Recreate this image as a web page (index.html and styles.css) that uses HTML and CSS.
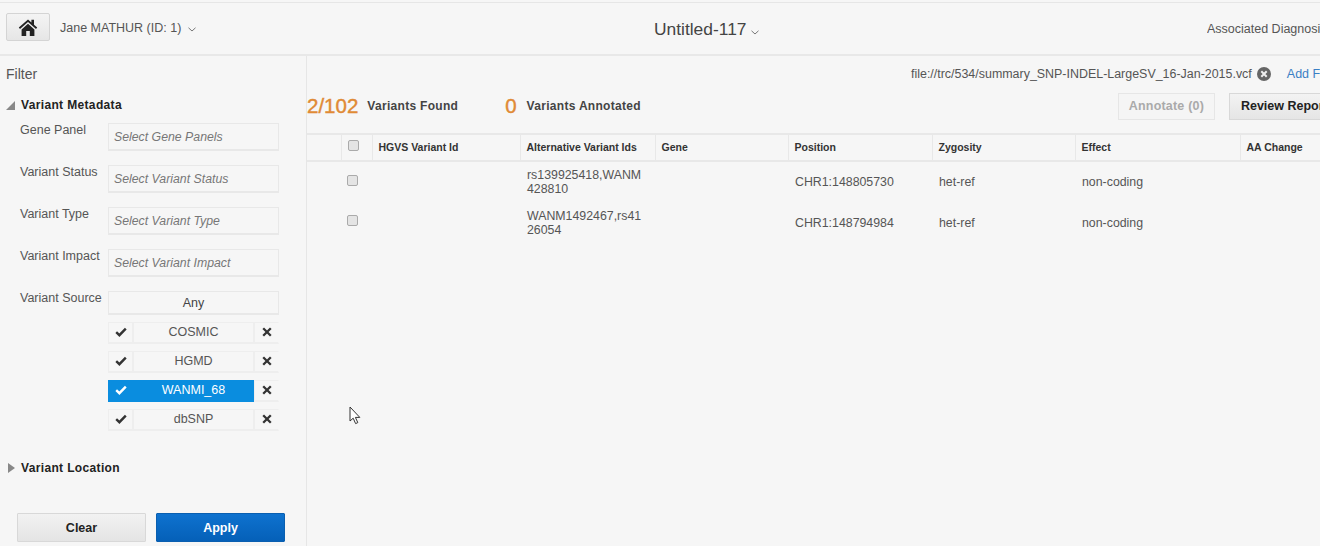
FILE: index.html
```html
<!DOCTYPE html>
<html lang="en">
<head>
<meta charset="utf-8">
<title>Variants</title>
<link rel="stylesheet" href="styles.css">
</head>
<body>
<div class="app">
  <header class="topbar">
    <div class="patient">
      <button class="home" aria-label="Home">
        <svg width="20" height="19" viewBox="0 0 20 19"><path d="M10 1.5 L0.8 9.6 L2 11 L10 4 L18 11 L19.2 9.6 L16 6.8 V1.8 H13.4 V4.5 Z" fill="#222"/><path d="M3.6 11.4 L10 5.8 L16.4 11.4 V18 H11.8 V13 H8.2 V18 H3.6 Z" fill="#222"/></svg>
      </button>
      <span class="patient-name">Jane MATHUR (ID: 1)</span>
      <svg class="chev" width="8" height="5" viewBox="0 0 8 5"><path d="M0.5 0.8 L4 4 L7.5 0.8" fill="none" stroke="#777" stroke-width="1"/></svg>
    </div>
    <div class="title">Untitled-117<svg class="chev" width="8" height="5" viewBox="0 0 8 5"><path d="M0.5 0.8 L4 4 L7.5 0.8" fill="none" stroke="#777" stroke-width="1"/></svg></div>
    <div class="assoc">Associated Diagnosis</div>
  </header>
  <div class="content">
    <aside class="sidebar">
      <h2 class="filter-title">Filter</h2>
      <div class="section-head open"><span class="tri-open"></span>Variant Metadata</div>
      <div class="fields">
        <label class="lbl">Gene Panel</label><div class="sel">Select Gene Panels</div>
        <label class="lbl">Variant Status</label><div class="sel">Select Variant Status</div>
        <label class="lbl">Variant Type</label><div class="sel">Select Variant Type</div>
        <label class="lbl">Variant Impact</label><div class="sel">Select Variant Impact</div>
        <label class="lbl">Variant Source</label>
        <div class="source">
          <div class="any">Any</div>
          <div class="src-row">
            <span class="ck"><svg width="12" height="10" viewBox="0 0 12 10"><path d="M1.2 5.2 L4.4 8.2 L10.8 1.6" fill="none" stroke="#333" stroke-width="2.4"/></svg></span>
            <span class="nm">COSMIC</span>
            <span class="x"><svg width="10" height="10" viewBox="0 0 10 10"><path d="M1.2 1.2 L8.8 8.8 M8.8 1.2 L1.2 8.8" fill="none" stroke="#333" stroke-width="2.3"/></svg></span>
          </div>
          <div class="src-row">
            <span class="ck"><svg width="12" height="10" viewBox="0 0 12 10"><path d="M1.2 5.2 L4.4 8.2 L10.8 1.6" fill="none" stroke="#333" stroke-width="2.4"/></svg></span>
            <span class="nm">HGMD</span>
            <span class="x"><svg width="10" height="10" viewBox="0 0 10 10"><path d="M1.2 1.2 L8.8 8.8 M8.8 1.2 L1.2 8.8" fill="none" stroke="#333" stroke-width="2.3"/></svg></span>
          </div>
          <div class="src-row active">
            <span class="ck"><svg width="12" height="10" viewBox="0 0 12 10"><path d="M1.2 5.2 L4.4 8.2 L10.8 1.6" fill="none" stroke="#fff" stroke-width="2.4"/></svg></span>
            <span class="nm">WANMI_68</span>
            <span class="x"><svg width="10" height="10" viewBox="0 0 10 10"><path d="M1.2 1.2 L8.8 8.8 M8.8 1.2 L1.2 8.8" fill="none" stroke="#333" stroke-width="2.3"/></svg></span>
          </div>
          <div class="src-row">
            <span class="ck"><svg width="12" height="10" viewBox="0 0 12 10"><path d="M1.2 5.2 L4.4 8.2 L10.8 1.6" fill="none" stroke="#333" stroke-width="2.4"/></svg></span>
            <span class="nm">dbSNP</span>
            <span class="x"><svg width="10" height="10" viewBox="0 0 10 10"><path d="M1.2 1.2 L8.8 8.8 M8.8 1.2 L1.2 8.8" fill="none" stroke="#333" stroke-width="2.3"/></svg></span>
          </div>
        </div>
      </div>
      <div class="section-head closed"><span class="tri-closed"></span>Variant Location</div>
      <div class="actions">
        <button class="btn-clear">Clear</button>
        <button class="btn-apply">Apply</button>
      </div>
    </aside>
    <main class="main">
      <div class="filebar">
        <span class="file">file://trc/534/summary_SNP-INDEL-LargeSV_16-Jan-2015.vcf</span>
        <svg class="file-x" width="14" height="14" viewBox="0 0 14 14"><circle cx="7" cy="7" r="7" fill="#666"/><path d="M4.3 4.3 L9.7 9.7 M9.7 4.3 L4.3 9.7" stroke="#eee" stroke-width="2"/></svg>
        <a class="add">Add File</a>
      </div>
      <div class="summary">
        <span class="count">2/102</span><span class="cap">Variants Found</span>
        <span class="count zero">0</span><span class="cap wide">Variants Annotated</span>
        <button class="annotate">Annotate (0)</button>
        <button class="review">Review Report</button>
      </div>
      <table class="grid">
        <colgroup>
          <col class="c-a"><col class="c-b"><col class="c-c"><col class="c-d"><col class="c-e"><col class="c-f"><col class="c-g"><col class="c-h"><col class="c-i">
        </colgroup>
        <thead>
          <tr><th></th><th><span class="cb"></span></th><th>HGVS Variant Id</th><th>Alternative Variant Ids</th><th>Gene</th><th>Position</th><th>Zygosity</th><th>Effect</th><th>AA Change</th></tr>
        </thead>
        <tbody>
          <tr><td></td><td><span class="cb"></span></td><td></td><td>rs139925418,WANM<br>428810</td><td></td><td>CHR1:148805730</td><td>het-ref</td><td>non-coding</td><td></td></tr>
          <tr><td></td><td><span class="cb"></span></td><td></td><td>WANM1492467,rs41<br>26054</td><td></td><td>CHR1:148794984</td><td>het-ref</td><td>non-coding</td><td></td></tr>
        </tbody>
      </table>
    </main>
  </div>
  <svg class="cursor" width="12" height="19" viewBox="0 0 12 19"><path d="M1 1 V15 L4.2 12.2 L6.6 17.6 L8.8 16.6 L6.4 11.4 H10.8 Z" fill="#fff" stroke="#333" stroke-width="1"/></svg>
</div>
</body>
</html>
```
FILE: styles.css
```css
* { box-sizing: border-box; }
html, body { margin: 0; height: 100%; overflow: hidden; }
body { background: #f6f6f6; font-family: "Liberation Sans", Arial, sans-serif; color: #555; font-size: 12px; }
.app { position: relative; width: 1320px; height: 546px; overflow: hidden; padding-top: 2px; }
button { font-family: inherit; cursor: default; }

.topbar { height: 54px; border-top: 1px solid #e6e6e6; border-bottom: 2px solid #e8e8e8; display: grid; grid-template-columns: 654px 553px 1fr; align-items: center; white-space: nowrap; }
.patient { display: flex; align-items: flex-start; align-self: start; padding: 10px 0 0 6px; }
.home { width: 44px; height: 28px; padding: 0; display: flex; align-items: center; justify-content: center; background: linear-gradient(#f4f4f4, #e6e6e6); border: 1px solid #d4d4d4; border-radius: 2px; }
.patient-name { margin: 7px 0 0 10px; font-size: 12.5px; line-height: 16px; color: #555; }
.patient .chev { margin: 14px 0 0 7px; }
.title { font-size: 17.4px; color: #444; padding-top: 1px; }
.title .chev { margin-left: 5px; }
.assoc { font-size: 12.5px; color: #555; overflow: hidden; }

.content { display: flex; height: 490px; }
.sidebar { width: 307px; flex: none; border-right: 1px solid #e6e6e6; padding: 10px 0 0 6px; }
.filter-title { margin: 0; font-size: 14px; font-weight: normal; color: #555; line-height: 16px; }
.section-head { font-weight: bold; font-size: 12px; color: #222; letter-spacing: .35px; display: flex; align-items: center; line-height: 16px; }
.section-head.open { margin-top: 15px; }
.section-head.closed { margin-top: 30px; }
.tri-open { width: 0; height: 0; border-style: solid; border-width: 0 0 9px 9px; border-color: transparent transparent #888 transparent; margin-right: 6px; }
.tri-closed { width: 0; height: 0; border-style: solid; border-width: 5.5px 0 5.5px 7px; border-color: transparent transparent transparent #888; margin: 0 6px 0 2px; }

.fields { display: grid; grid-template-columns: 88px 171px; row-gap: 14px; padding-left: 14px; margin-top: 10px; }
.lbl { font-size: 12.5px; color: #555; line-height: 15px; white-space: nowrap; }
.sel { height: 28px; border: 1px solid #e8e8e8; border-bottom-width: 2px; padding-left: 5px; font-size: 12.3px; font-style: italic; color: #777; line-height: 26px; }
.source { display: flex; flex-direction: column; }
.any { height: 24px; border: 1px solid #e8e8e8; border-bottom-width: 2px; text-align: center; line-height: 22px; font-size: 12.5px; color: #444; margin-bottom: 7px; }
.src-row { display: grid; grid-template-columns: 25px 121px 25px; height: 21px; margin-bottom: 8px; line-height: 19px; text-align: center; font-size: 12.5px; }
.src-row:last-child { margin-bottom: 0; }
.src-row span { border: 1px solid #eeeeee; border-bottom-width: 2px; display: flex; align-items: center; justify-content: center; }
.src-row svg { margin-bottom: 2px; }
.src-row .x { border-right-color: transparent; }
.src-row.active .ck, .src-row.active .nm { background: #0a8ddf; border-color: #0a8ddf; color: #fff; }

.actions { display: flex; gap: 10px; padding-left: 11px; margin-top: 37px; }
.btn-clear { width: 129px; height: 29px; padding: 0; font-size: 12.5px; font-weight: bold; color: #222; background: linear-gradient(#f2f2f2, #e4e4e4); border: 1px solid #d8d8d8; border-radius: 1px; }
.btn-apply { width: 129px; height: 29px; padding: 0; font-size: 12.5px; font-weight: bold; color: #fff; background: linear-gradient(#0e72cf, #0560b8); border: 1px solid #0a5fb0; border-radius: 1px; }

.main { flex: 1; min-width: 0; overflow: hidden; }
.filebar { display: flex; align-items: center; height: 16px; margin-top: 10px; padding-left: 604px; white-space: nowrap; }
.file { font-size: 12.45px; color: #555; }
.file-x { margin-left: 5px; flex: none; }
.add { margin-left: 16px; font-size: 12.5px; color: #3a7fc4; }
.summary { display: flex; align-items: center; height: 30px; margin-top: 9px; white-space: nowrap; }
.count { font-size: 20.5px; color: #e08a35; -webkit-text-stroke: .4px #e08a35; }
.cap { font-weight: bold; font-size: 12px; color: #444; letter-spacing: .3px; margin-left: 9px; }
.cap.wide { margin-left: 10px; }
.zero { margin-left: 47px; }
.annotate { margin-left: 477px; width: 97px; height: 27px; padding: 0; flex: none; font-size: 12.5px; font-weight: bold; color: #aaa; background: #f5f5f5; border: 1px solid #e6e6e6; letter-spacing: .2px; }
.review { margin-left: 14px; width: 110px; height: 27px; padding: 0 0 0 11px; text-align: left; flex: none; font-size: 12.5px; font-weight: bold; color: #222; background: linear-gradient(#f3f3f3, #e5e5e5); border: 1px solid #d8d8d8; white-space: nowrap; }

.grid { table-layout: fixed; border-collapse: collapse; width: 1041px; margin-top: 12px; }
.c-a { width: 34px; } .c-b { width: 31px; } .c-c { width: 148px; } .c-d { width: 135px; } .c-e { width: 133px; }
.c-f { width: 144px; } .c-g { width: 143px; } .c-h { width: 165px; } .c-i { width: 108px; }
.grid th { height: 27px; padding: 0 0 2px 6px; text-align: left; font-size: 10.5px; color: #333; border-top: 2px solid #e8e8e8; border-bottom: 2px solid #e8e8e8; border-left: 1px solid #e8e8e8; white-space: nowrap; }
.grid th:first-child { border-left: 0; }
.grid td { height: 41px; padding: 0 0 0 7px; font-size: 12.35px; line-height: 14px; color: #555; vertical-align: middle; white-space: nowrap; }
.grid th:nth-child(2), .grid td:nth-child(2) { padding: 0 0 0 6px; }
.cb { display: block; width: 11px; height: 11px; margin-top: -4px; background: #e4e4e4; border: 1px solid #aaa; border-radius: 2px; }
.cursor { position: absolute; left: 349px; top: 406px; }
```
